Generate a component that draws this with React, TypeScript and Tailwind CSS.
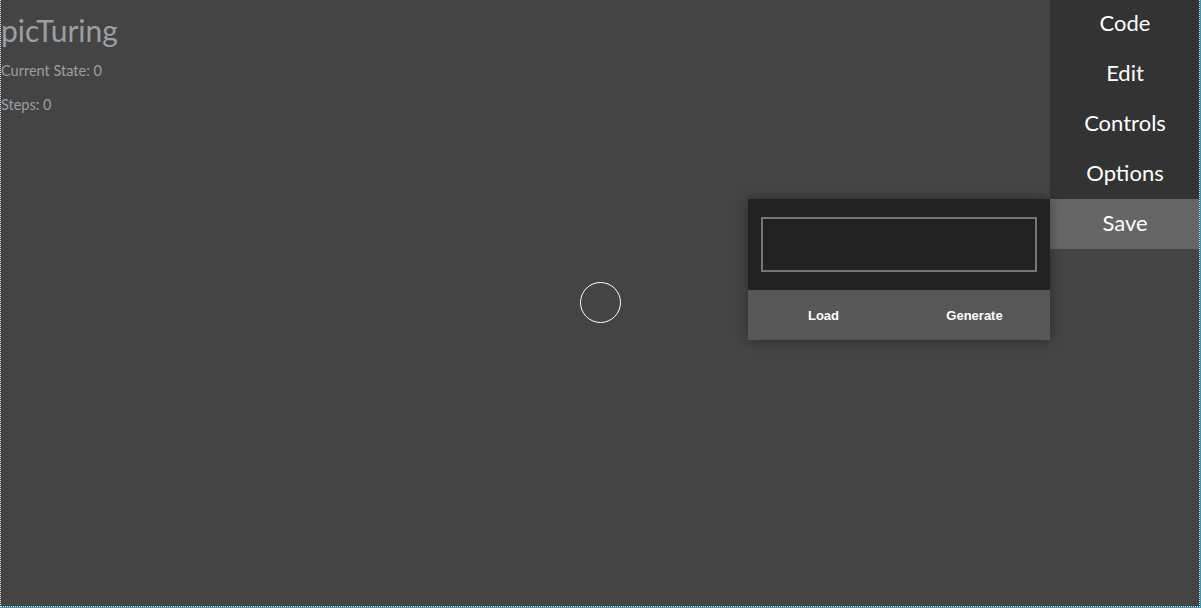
import React from "react";

const menuItems = ["Code", "Edit", "Controls", "Options", "Save"];

const App = () => {
  const active = "Save";

  return (
    <div className="w-[1201px] h-[608px] bg-[#2a9fbf] overflow-hidden">
      <div className="relative w-[1200px] h-[607px] bg-[#444444] border border-t-0 border-dotted border-[#e6e6e6] overflow-hidden font-['Lato',sans-serif]">
        {/* header info */}
        <div className="pl-0 pt-[12px] text-[#9a9fa3]">
          <h1 className="text-[30px] leading-[36px] font-normal">picTuring</h1>
          <p className="mt-[14px] text-[14.5px] leading-[18px]">Current State: 0</p>
          <p className="mt-[16px] text-[14.5px] leading-[18px]">Steps: 0</p>
        </div>

        {/* state node */}
        <div className="absolute left-[579px] top-[282px] w-[41px] h-[41px] rounded-full border border-white" />

        {/* side menu */}
        <nav className="absolute top-[-1px] right-[-1px] w-[150px] flex flex-col bg-[#333333]">
          {menuItems.map((item) => (
            <button
              key={item}
              className={`h-[50px] pb-[4px] flex items-center justify-center text-[22px] text-white ${
                item === active ? "bg-[#666666]" : ""
              }`}
            >
              {item}
            </button>
          ))}
        </nav>

        {/* save popup */}
        <div className="absolute left-[747px] top-[199px] w-[302px] shadow-[0_0_12px_rgba(0,0,0,0.35)]">
          <div className="bg-[#222222] px-[13px] pt-[18px] pb-[18px]">
            <input
              type="text"
              className="w-full h-[55px] bg-[#222222] border-2 border-[#777777] outline-none text-white"
            />
          </div>
          <div className="h-[50px] bg-[#575757] grid grid-cols-2 font-['Liberation_Sans',sans-serif] text-[13px] font-bold text-white">
            <button className="flex items-center justify-center pt-[2px]">Load</button>
            <button className="flex items-center justify-center pt-[2px]">Generate</button>
          </div>
        </div>
      </div>
    </div>
  );
};

export default App;
